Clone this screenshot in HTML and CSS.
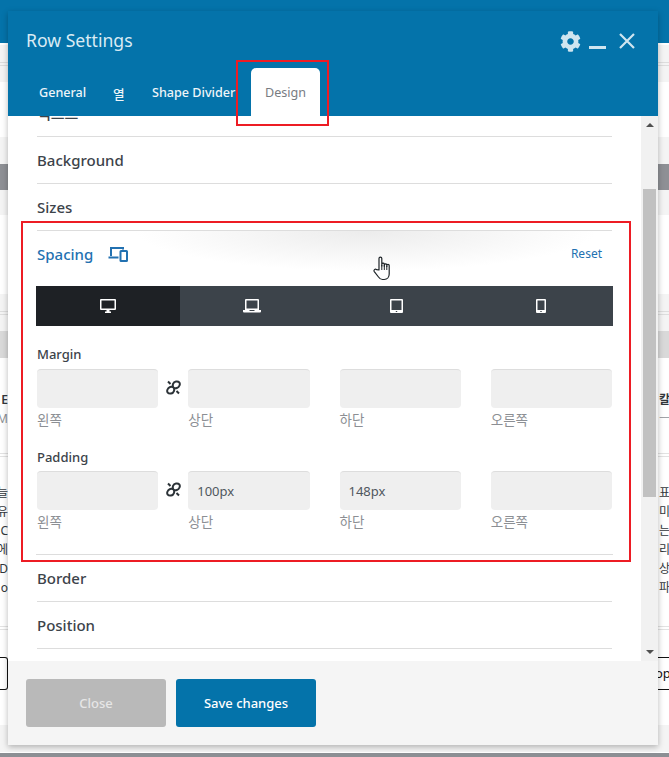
FILE: index.html
```html
<!DOCTYPE html>
<html lang="ko">
<head>
<meta charset="utf-8">
<title>Row Settings</title>
<link rel="stylesheet" href="styles.css">
</head>
<body>
<div class="page">
  <div class="bg bg-top"></div>
  <div class="bg bg-soft bg-lined h37 mt2"></div>
  <div class="bg h55"></div>
  <div class="bg bg-soft h27"></div>
  <div class="bg bg-dark h26"></div>
  <div class="bg bg-soft h25"></div>
  <div class="bg h79"></div>
  <div class="bg bg-soft bg-lined h37"></div>
  <div class="bg bg-mid h27"></div>
  <div class="bg-text">
    <div class="frag-row"><span class="l"><b>E</b></span><span class="r"><b>칼</b></span></div>
    <div class="frag-row"><span class="l muted">M</span><span class="r muted">ㅡ</span></div>
  </div>
  <div class="dbl d1"></div>
  <div class="bg-text second">
    <div class="frag-row"><span class="l">늘</span><span class="r">표</span></div>
    <div class="frag-row"><span class="l">유</span><span class="r">미</span></div>
    <div class="frag-row"><span class="l">:C</span><span class="r">는</span></div>
    <div class="frag-row"><span class="l">에</span><span class="r">리</span></div>
    <div class="frag-row"><span class="l">D</span><span class="r">상</span></div>
    <div class="frag-row"><span class="l">o</span><span class="r">파</span></div>
  </div>
  <div class="dbl d2"></div>
  <div class="bg-btn"><span class="bg-btn-l"></span><span class="bg-btn-r">op</span></div>
  <div class="bg bg-soft h27 foot"></div>
  <div class="bg-bottom"></div>

  <section class="modal">
    <header class="m-head">
      <div class="m-title-row">
        <h1 class="m-title">Row Settings</h1>
        <div class="m-actions">
          <svg class="i-gear" viewBox="0 0 512 512"><path fill="currentColor" d="M487.4 315.7l-42.6-24.6c4.3-23.2 4.3-47 0-70.2l42.6-24.6c4.9-2.8 7.1-8.6 5.5-14-11.1-35.6-30-67.8-54.7-94.6-3.8-4.1-10-5.1-14.8-2.3L380.8 110c-17.9-15.4-38.5-27.3-60.8-35.1V25.8c0-5.6-3.9-10.5-9.4-11.7-36.7-8.2-74.3-7.8-109.2 0-5.5 1.2-9.4 6.1-9.4 11.7V75c-22.2 7.9-42.8 19.8-60.8 35.1L88.7 85.5c-4.9-2.8-11-1.9-14.8 2.3-24.7 26.7-43.6 58.9-54.7 94.6-1.7 5.4.6 11.2 5.5 14L67.3 221c-4.3 23.2-4.3 47 0 70.2l-42.6 24.6c-4.9 2.8-7.1 8.6-5.5 14 11.1 35.6 30 67.8 54.7 94.6 3.8 4.1 10 5.1 14.8 2.3l42.6-24.6c17.9 15.4 38.5 27.3 60.8 35.1v49.2c0 5.6 3.9 10.5 9.4 11.7 36.7 8.2 74.3 7.8 109.2 0 5.5-1.2 9.4-6.1 9.4-11.7v-49.2c22.2-7.9 42.8-19.8 60.8-35.1l42.6 24.6c4.9 2.8 11 1.9 14.8-2.3 24.7-26.7 43.6-58.9 54.7-94.6 1.5-5.5-.7-11.3-5.6-14.1zM256 336c-44.1 0-80-35.9-80-80s35.9-80 80-80 80 35.9 80 80-35.9 80-80 80z"/></svg>
          <span class="i-min"></span>
          <svg class="i-close" viewBox="0 0 16 16"><path d="M1 1l14 14M15 1L1 15" stroke="currentColor" stroke-width="2.2" fill="none"/></svg>
        </div>
      </div>
      <nav class="m-tabs">
        <span class="tab t-gen">General</span>
        <span class="tab t-col">열</span>
        <span class="tab t-shape">Shape Divider</span>
        <span class="tab active">Design</span>
      </nav>
    </header>

    <div class="m-body">
      <div class="content">
        <div class="inner">
          <div class="acc">텍스트</div>
          <div class="acc">Background</div>
          <div class="acc">Sizes</div>
          <div class="spacing">
            <div class="sp-head">
              <span class="sp-title">Spacing</span>
              <svg class="i-resp" viewBox="0 0 20 16"><path d="M3 10V2h12v1.500M0.500 11.500h10" fill="none" stroke="currentColor" stroke-width="2"/><rect x="12.500" y="5" width="6.500" height="10" rx="0.500" fill="none" stroke="currentColor" stroke-width="2"/></svg>
              <span class="reset">Reset</span>
            </div>
            <div class="devices">
              <div class="dev on"><svg width="16" height="14" viewBox="0 0 16 14"><path d="M1 0h14a1 1 0 0 1 1 1v9a1 1 0 0 1-1 1H1a1 1 0 0 1-1-1V1a1 1 0 0 1 1-1zm.5 1.500v8h13v-8z" fill="#fff" fill-rule="evenodd"/><path d="M6.500 11h3v1.500H11V14H5v-1.500h1.500z" fill="#fff"/></svg></div>
              <div class="dev"><svg width="18" height="14" viewBox="0 0 18 14"><path d="M3 0h12a1 1 0 0 1 1 1v10H2V1a1 1 0 0 1 1-1zm.5 1.500v8h11v-8z" fill="#fff" fill-rule="evenodd"/><path d="M0 11h6.500v1h5v-1H18v1.500a1 1 0 0 1-1 1H1a1 1 0 0 1-1-1z" fill="#fff"/></svg></div>
              <div class="dev"><svg width="13" height="14" viewBox="0 0 13 14"><path d="M1 0h11a1 1 0 0 1 1 1v12a1 1 0 0 1-1 1H1a1 1 0 0 1-1-1V1a1 1 0 0 1 1-1zm.5 1.500V11h10V1.500zM5.800 12v1h1.400v-1z" fill="#fff" fill-rule="evenodd"/></svg></div>
              <div class="dev"><svg width="10" height="14" viewBox="0 0 10 14"><path d="M1 0h8a1 1 0 0 1 1 1v12a1 1 0 0 1-1 1H1a1 1 0 0 1-1-1V1a1 1 0 0 1 1-1zm.5 1.500V11h7V1.500zM4.300 12v1h1.400v-1z" fill="#fff" fill-rule="evenodd"/></svg></div>
            </div>

            <div class="group">
              <div class="g-label">Margin</div>
              <div class="g-fields">
                <label class="field"><span class="box"></span><span class="cap">왼쪽</span></label>
                <span class="link"><svg width="15" height="15" viewBox="0 0 15 15"><path d="M7.500 7.500C6 5.500 7 2 10 1.500c3-.5 4.500 1.500 3.500 4-1 2.500-4 3.500-6 2-2-1.500-5-.5-6 2-1 2.500.5 4.500 3.500 4 3-.5 4-4 2.500-6zM2 1.500 4.500 4M10.500 11l2.500 2.500" fill="none" stroke="currentColor" stroke-width="2"/></svg></span>
                <label class="field"><span class="box"></span><span class="cap">상단</span></label>
                <span></span>
                <label class="field"><span class="box"></span><span class="cap">하단</span></label>
                <span></span>
                <label class="field"><span class="box"></span><span class="cap">오른쪽</span></label>
              </div>
            </div>

            <div class="group g2">
              <div class="g-label">Padding</div>
              <div class="g-fields">
                <label class="field"><span class="box"></span><span class="cap">왼쪽</span></label>
                <span class="link"><svg width="15" height="15" viewBox="0 0 15 15"><path d="M7.500 7.500C6 5.500 7 2 10 1.500c3-.5 4.500 1.500 3.500 4-1 2.500-4 3.500-6 2-2-1.500-5-.5-6 2-1 2.500.5 4.500 3.500 4 3-.5 4-4 2.500-6zM2 1.500 4.500 4M10.500 11l2.500 2.500" fill="none" stroke="currentColor" stroke-width="2"/></svg></span>
                <label class="field"><span class="box">100px</span><span class="cap">상단</span></label>
                <span></span>
                <label class="field"><span class="box">148px</span><span class="cap">하단</span></label>
                <span></span>
                <label class="field"><span class="box"></span><span class="cap">오른쪽</span></label>
              </div>
            </div>
          </div>
          <div class="acc">Border</div>
          <div class="acc">Position</div>
        </div>
      </div>
      <div class="sbar">
        <span class="arrow up"></span>
        <span class="thumb"></span>
        <span class="arrow down"></span>
      </div>
    </div>

    <footer class="m-foot">
      <button class="btn btn-close">Close</button>
      <button class="btn btn-save">Save changes</button>
    </footer>
  </section>

  <div class="mark mark-tab"></div>
  <div class="mark mark-spacing"></div>
  <svg class="cursor" width="18" height="25" viewBox="0 0 18 25"><path d="M6 14V2.500a1.400 1.400 0 0 1 2.800 0V10l0-2a1.300 1.300 0 0 1 2.500 0v2.200-1.400a1.300 1.300 0 0 1 2.500 0v1.700-1a1.200 1.200 0 0 1 2.400 0V18c0 3-2 5.500-5 5.500H9.500c-2 0-3-1-4-2.500L1.300 15.600a1.500 1.500 0 0 1 2.200-2z" fill="#fff" stroke="#1d2327" stroke-width="1.200" stroke-linejoin="round"/><path d="M8.800 9v5M11.300 9v5M13.800 10v4" stroke="#1d2327" stroke-width="1"/></svg>
</div>
</body>
</html>
```
FILE: styles.css
```css
* { box-sizing: border-box; }
html, body { margin: 0; padding: 0; }
body {
  width: 669px;
  height: 757px;
  overflow: hidden;
  background: #fff;
  font-family: "Noto Sans", "Noto Sans CJK KR", sans-serif;
  color: #3c434a;
}
.page { position: relative; width: 669px; height: 757px; overflow: hidden; }

/* page behind the dialog */
.bg-top { height: 43px; background: #0473aa; }
.bg { width: 100%; }
.bg-soft { background-color: #f4f4f4; }
.bg-dark { background: #8e9095; }
.bg-mid { background: #d9d9d9; }
.mt2 { margin-top: 2px; }
.h37 { height: 37px; }
.h55 { height: 55px; }
.h27 { height: 27px; }
.h26 { height: 26px; }
.h25 { height: 25px; }
.h79 { height: 79px; }
.bg-lined { background-image: linear-gradient(#ddd, #ddd), linear-gradient(#ddd, #ddd); background-size: 100% 1px; background-repeat: no-repeat; background-position: 0 17px, 0 20px; }
.bg-text { padding-top: 32px; font-size: 12px; line-height: 19px; color: #32373c; }
.bg-text.second { padding-top: 26px; }
.frag-row { display: flex; justify-content: space-between; height: 19px; }
.frag-row .l { width: 8px; display: flex; justify-content: flex-end; overflow: hidden; }
.frag-row .r { width: 11px; overflow: hidden; padding-left: 1px; white-space: nowrap; }
.frag-row b { font-weight: 600; }
.muted { color: #8c8f94; }
.dbl { height: 4px; border-top: 1px solid #e2e2e2; border-bottom: 1px solid #e2e2e2; }
.d1 { margin-top: 25px; }
.d2 { margin-top: 29px; }
.bg-btn { display: flex; justify-content: space-between; height: 33px; margin-top: 27px; }
.bg-btn-l { width: 8px; border: 1px solid #111; border-left: 0; border-radius: 0 3px 3px 0; }
.bg-btn-r { width: 11px; border-top: 1px solid #111; border-bottom: 1px solid #111; font-size: 13px; line-height: 30px; color: #111; overflow: hidden; text-indent: -3px; }
.foot { margin-top: 35px; }
.bg-bottom { height: 4px; margin-top: 1px; background: #8c8f94; }

/* dialog */
.modal {
  position: absolute;
  left: 8px;
  top: 11px;
  width: 650px;
  height: 734px;
  display: flex;
  flex-direction: column;
  background: #fff;
  box-shadow: 0 2px 6px rgba(0, 0, 0, .28);
}
.m-head { height: 105px; flex: none; background: #0473aa; display: flex; flex-direction: column; }
.m-title-row { height: 57px; display: flex; align-items: center; justify-content: space-between; padding: 1px 23px 0 18px; }
.m-title { margin: 0; font-size: 17.600px; font-weight: 400; color: #d9ebf4; }
.m-actions { display: flex; align-items: center; padding-top: 2px; color: #cfe5f0; }
.i-gear { width: 21px; height: 21px; }
.i-min { width: 17px; height: 3px; margin: 13px 13px 0 8px; background: currentColor; }
.i-close { width: 16px; height: 16px; }
.m-tabs { display: flex; align-items: stretch; height: 48px; padding-left: 31px; }
.tab { font-size: 12.600px; font-weight: 500; color: #eef5f9; padding-top: 16px; white-space: nowrap; }
.t-gen { width: 74px; }
.t-col { width: 39px; }
.t-shape { width: 99px; overflow: hidden; }
.tab.active { width: 69px; background: #fff; border-radius: 5px 5px 0 0; color: #787c82; font-weight: 400; text-align: center; }

.m-body { flex: 1; min-height: 0; display: flex; overflow: hidden; }
.content { flex: 1; min-width: 0; overflow: hidden; }
.inner { margin-top: -26px; padding: 0 29px; }
.acc { height: 47px; padding-top: 11px; border-bottom: 1px solid #ddd; font-size: 15px; font-weight: 500; line-height: 24px; color: #3c434a; }

.spacing { margin: 0 -1px; border-bottom: 1px solid #ddd; padding-bottom: 20px; }
.sp-head {
  height: 55px;
  display: flex;
  align-items: center;
  padding: 0 11px 10px 1px;
  background: radial-gradient(ellipse 230px 40px at 330px 0, #ececec, #fff);
}
.sp-title { font-size: 15px; font-weight: 500; color: #2271b1; }
.i-resp { width: 20px; height: 16px; margin-left: 15px; color: #2271b1; }
.reset { margin-left: auto; font-size: 12px; color: #2271b1; }
.devices { display: grid; grid-template-columns: 144px repeat(3, 1fr); height: 40px; background: #3c434a; }
.dev { display: flex; align-items: center; justify-content: center; }
.dev.on { background: #1e2125; }

.group { padding: 16px 1px 0; }
.group.g2 { padding-top: 13px; }
.g-label { height: 27px; font-size: 13px; font-weight: 500; line-height: 24px; color: #3c434a; }
.g2 .g-label { height: 26px; }
.g-fields { display: grid; grid-template-columns: 1fr 30px 1fr 30px 1fr 30px 1fr; }
.field { display: flex; flex-direction: column; }
.box { height: 39px; padding-left: 9px; background: #efefef; border-top: 1px solid #ddd; border-radius: 4px; font-size: 13px; line-height: 38px; color: #50575e; }
.cap { height: 24px; font-size: 13.500px; line-height: 25px; color: #8c8f94; }
.link { display: flex; justify-content: center; padding-top: 11px; color: #2c3338; }

.sbar { width: 17px; flex: none; display: flex; flex-direction: column; align-items: center; background: #f1f1f1; }
.arrow { flex: none; width: 0; height: 0; border-left: 4px solid transparent; border-right: 4px solid transparent; }
.arrow.up { margin-top: 7px; border-bottom: 4px solid #505050; }
.arrow.down { margin-top: 153px; border-top: 4px solid #505050; }
.thumb { flex: none; width: 13px; height: 308px; margin-top: 62px; background: #c1c1c1; }

.m-foot { height: 84px; flex: none; display: flex; gap: 10px; padding: 18px 18px; background: #f5f5f5; }
.btn { width: 140px; height: 48px; border: 0; border-radius: 3px; font-family: inherit; font-size: 13px; font-weight: 500; }
.btn-close { background: #b9b9b9; color: #e6e6e6; }
.btn-save { background: #0473aa; color: #fff; }

/* annotations on top of the screenshot */
.mark { position: absolute; border: 2px solid #ed1c24; pointer-events: none; }
.mark-tab { left: 236px; top: 60px; width: 93px; height: 66px; }
.mark-spacing { left: 21px; top: 221px; width: 610px; height: 341px; }
.cursor { position: absolute; left: 373px; top: 256px; }
```
